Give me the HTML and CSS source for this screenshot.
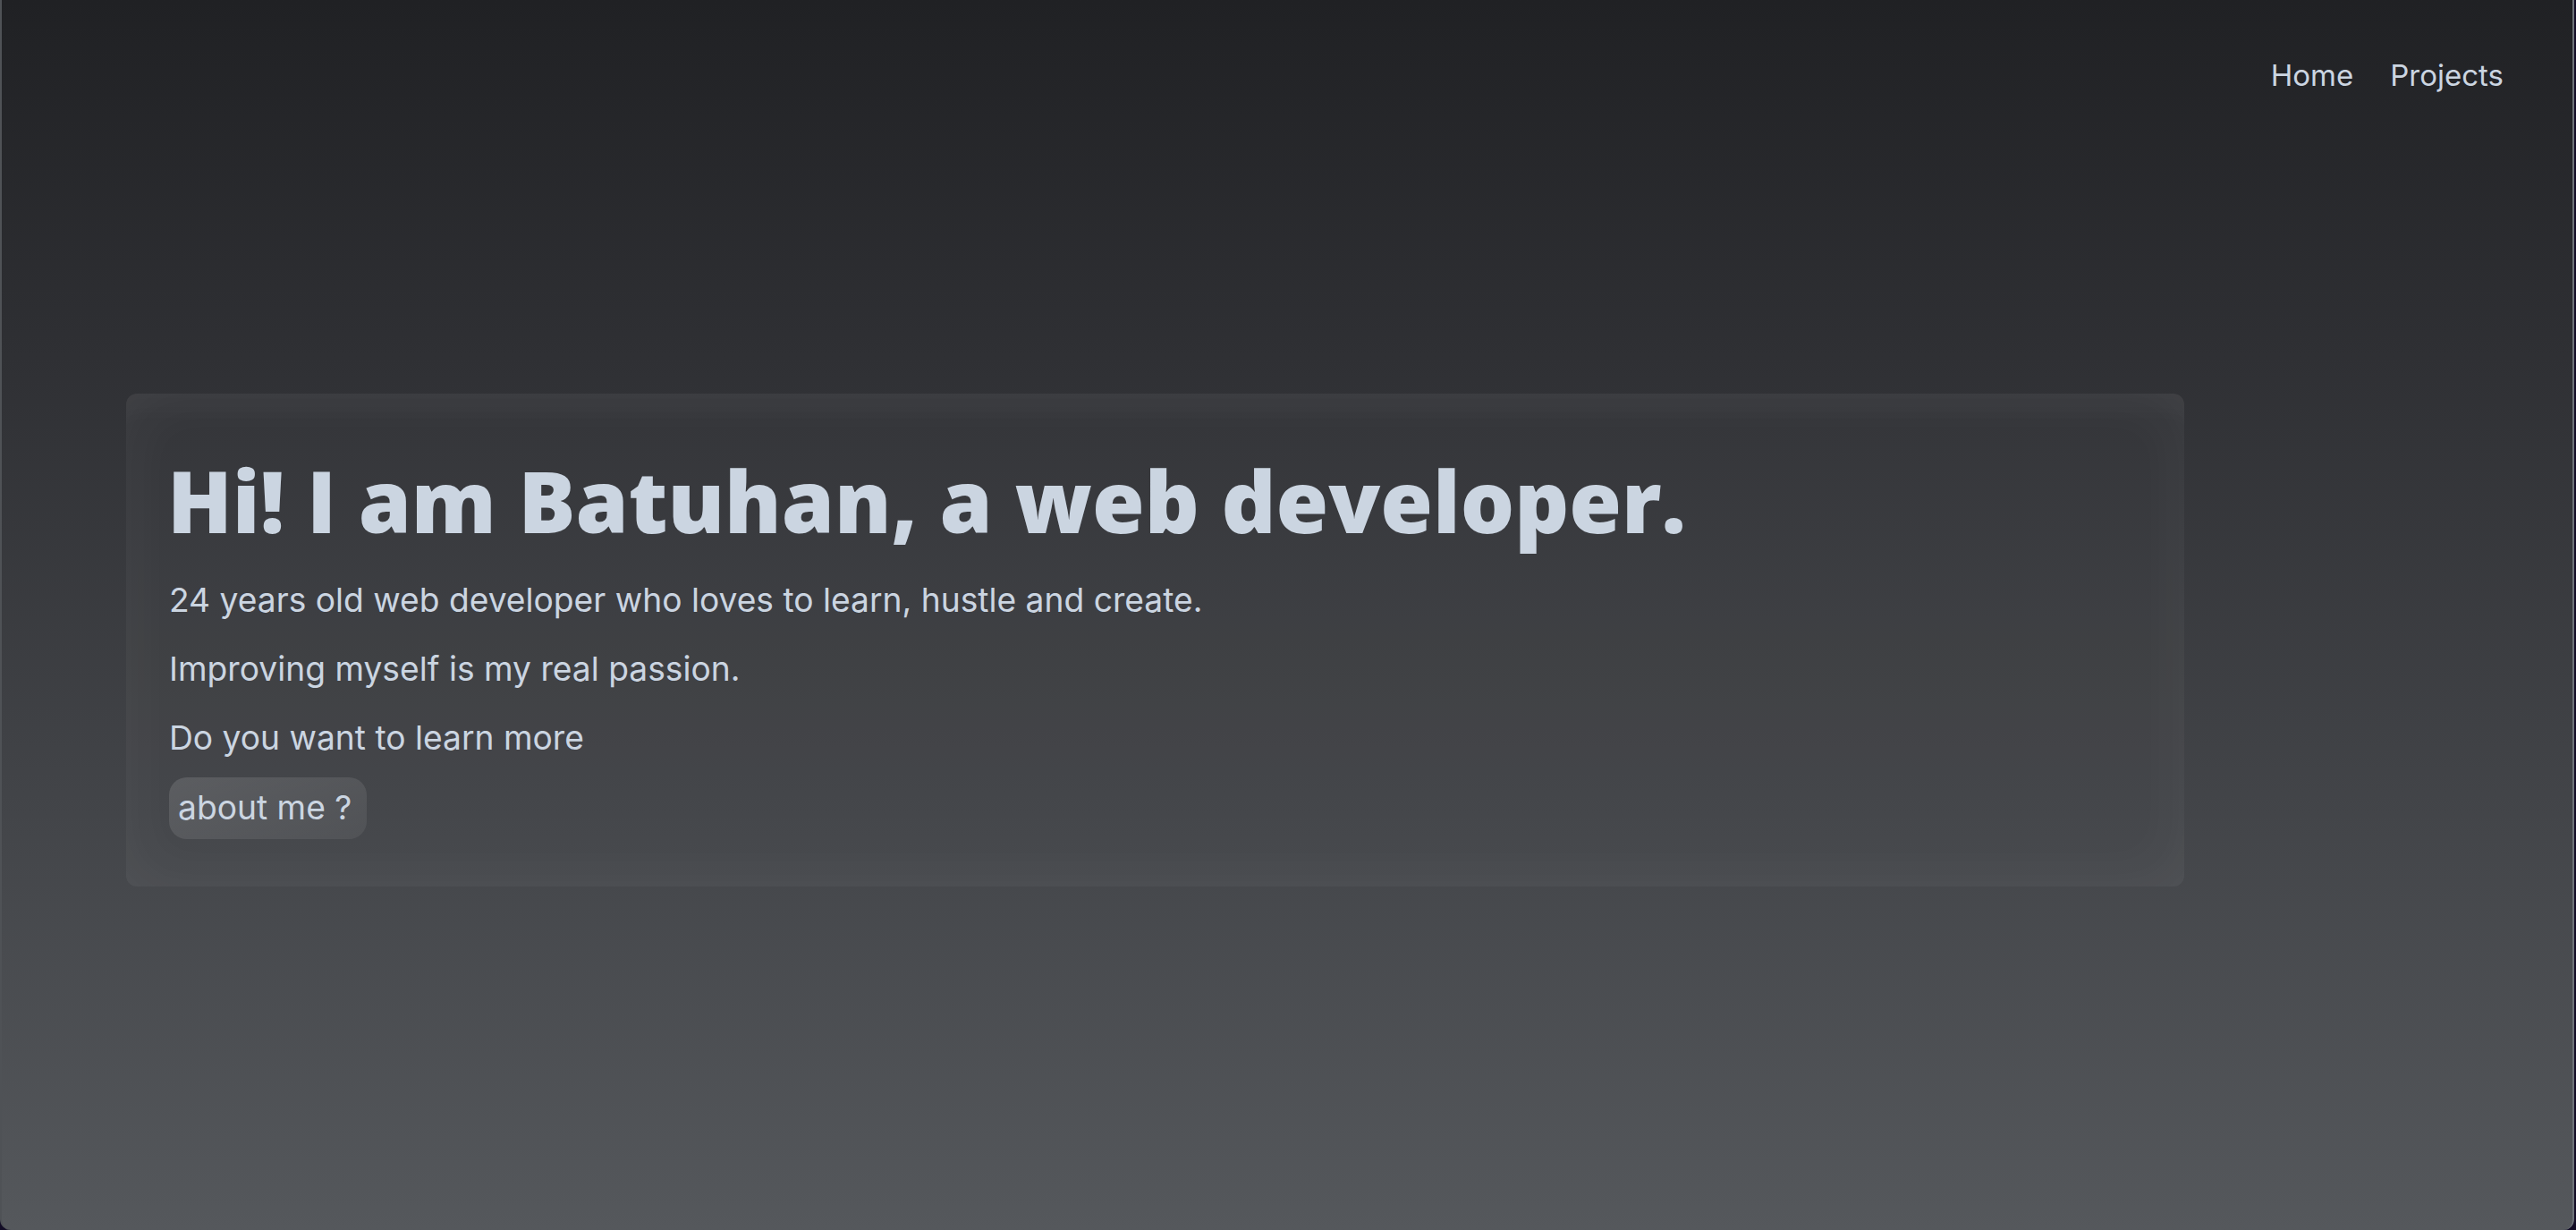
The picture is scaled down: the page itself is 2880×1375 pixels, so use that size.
FILE: index.html
```html
<!DOCTYPE html>
<html lang="en">
<head>
<meta charset="utf-8">
<title>Batuhan</title>
<link rel="stylesheet" href="styles.css">
</head>
<body>
<div class="window">
  <nav class="nav">
    <a class="nav-link" href="#">Home</a>
    <a class="nav-link" href="#">Projects</a>
  </nav>
  <main class="hero">
    <section class="card">
      <h1 class="title">Hi! I am Batuhan, a web developer.</h1>
      <div class="lines">
        <p class="line">24 years old web developer who loves to learn, hustle and create.</p>
        <p class="line">Improving myself is my real passion.</p>
        <div class="more">
          <p class="line">Do you want to learn more</p>
          <a class="about-btn" href="#">about me ?</a>
        </div>
      </div>
    </section>
  </main>
</div>
</body>
</html>
```
FILE: styles.css
```css
html, body {
  margin: 0;
  padding: 0;
}
body {
  background: #130d26;
  width: 2880px;
  height: 1375px;
  overflow: hidden;
}
.window {
  box-sizing: border-box;
  width: 2878px;
  height: 1375px;
  background: linear-gradient(180deg, #202124 0%, #2f3034 29%, #55585c 100%);
  border-left: 2px solid #4f5256;
  border-right: 2px solid #6d7278;
  border-radius: 0 0 12px 12px;
  font-family: "Inter", "Noto Sans", sans-serif;
  color: #cbd5e1;
  display: flex;
  flex-direction: column;
}
.nav {
  display: flex;
  justify-content: flex-end;
  gap: 41px;
  padding: 64px 77px 0 0;
}
.nav-link {
  font-size: 33px;
  line-height: 40px;
  color: #cbd5e1;
  text-decoration: none;
}
.hero {
  margin-top: 336px;
  padding-left: 139px;
}
.card {
  box-sizing: border-box;
  width: 2301px;
  padding: 64px 48px 53px 48px;
  border-radius: 12px;
  background: rgba(255, 255, 255, 0.015);
  box-shadow: inset 0 0 70px rgba(255, 255, 255, 0.055),
              inset 0 40px 40px -30px rgba(255, 255, 255, 0.04);
  display: flex;
  flex-direction: column;
}
.title {
  margin: 0 0 35px -2px;
  font-family: "Open Sans", "Noto Sans", sans-serif;
  font-weight: 800;
  font-size: 95px;
  line-height: 110px;
  color: #cbd5e1;
}
.lines {
  display: flex;
  flex-direction: column;
  gap: 33px;
}
.more {
  display: flex;
  flex-direction: column;
  align-items: flex-start;
  gap: 22px;
}
.line {
  margin: 0;
  font-size: 37.2px;
  line-height: 44px;
}
.about-btn {
  display: inline-block;
  font-size: 37.2px;
  line-height: 44px;
  padding: 12px 17px 13px 10px;
  border-radius: 20px;
  color: #cbd5e1;
  text-decoration: none;
  background: linear-gradient(160deg, rgba(255, 255, 255, 0.13), rgba(255, 255, 255, 0.06));
}
```
